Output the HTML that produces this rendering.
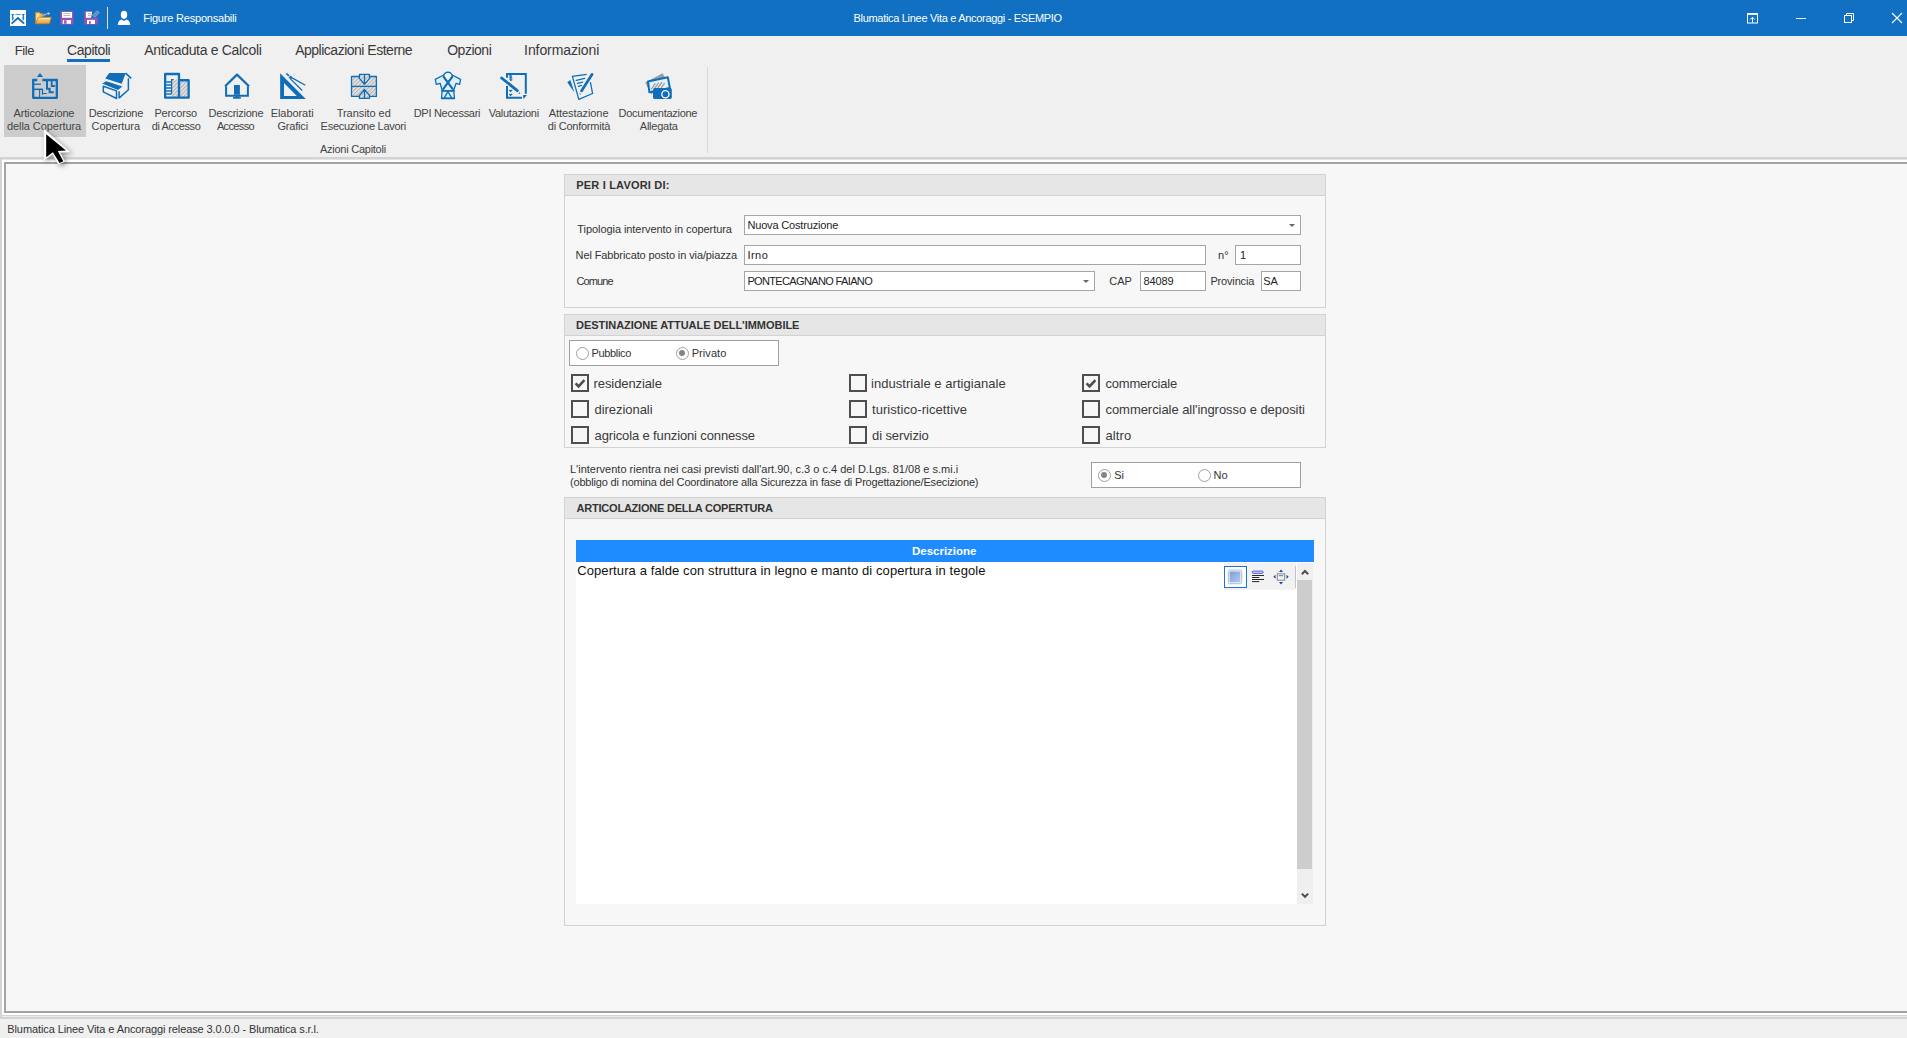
<!DOCTYPE html>
<html><head><meta charset="utf-8">
<style>
*{margin:0;padding:0;box-sizing:border-box}
html,body{width:1907px;height:1038px;overflow:hidden;background:#f0f0f0;font-family:"Liberation Sans",sans-serif}
.t{position:absolute;white-space:pre;line-height:1;transform-origin:0 0}
.r{position:absolute}
.panel{position:absolute;background:#f7f7f7;border:1px solid #d2d2d2}
.ph{position:absolute;left:0;top:0;right:0;height:21px;background:#e6e6e6;border-bottom:1px solid #d2d2d2}
.inp{position:absolute;background:#fff;border:1px solid #a5a5a5}
.cb{position:absolute;width:18px;height:18px;border:2px solid #4f4f4f}
.rad{position:absolute;width:13px;height:13px;border-radius:50%;border:1px solid #a0a0a0;background:#fff}
.dd{position:absolute;width:0;height:0;border-left:3.5px solid transparent;border-right:3.5px solid transparent;border-top:3.5px solid #666}
svg{position:absolute;overflow:visible}
</style></head><body>
<!-- title bar -->
<div class="r" style="left:0;top:0;width:1907px;height:36px;background:#1170c2"></div>
<!-- app icon -->
<svg style="left:10px;top:10px" width="16" height="16" viewBox="0 0 16 16">
<rect x="0" y="0" width="16" height="16" fill="#fff"/>
<path d="M1.6 13.6 L7.9 8 L14.2 13.6" fill="none" stroke="#1a6fb9" stroke-width="1.9"/>
<path d="M2.7 4.3 V10.3 M13.3 4.3 V10.3" stroke="#1a6fb9" stroke-width="1.2"/>
<path d="M1.5 4.5 H3.9 M12.1 4.5 H14.5" stroke="#1a6fb9" stroke-width="1"/>
<path d="M1.1 7.4 H4.3 L2.7 9.6 Z M11.7 7.4 H14.9 L13.3 9.6 Z" fill="#3d86cc"/>
<path d="M5.3 4.5 H10.7" stroke="#5b95d0" stroke-width="1"/>
</svg>
<!-- folder -->
<svg style="left:35px;top:11px" width="17" height="14" viewBox="0 0 17 14">
<defs><linearGradient id="fg" x1="0" y1="0" x2="0" y2="1"><stop offset="0" stop-color="#f8d98a"/><stop offset="1" stop-color="#e8a040"/></linearGradient></defs>
<path d="M0.5 1.3 H4.6 L6 2.8 H8.5 V12.6 H0.5 Z" fill="#f0b84e" stroke="#d07a1c" stroke-width="0.8"/>
<path d="M1.3 2.6 H4.3 V11 H1.3 Z" fill="#fbeaa8"/>
<path d="M3 6.3 H16.2 L14.4 12.7 H0.8 Z" fill="url(#fg)" stroke="#d07a1c" stroke-width="0.8"/>
<path d="M3.6 7 H15 L14.8 7.8 H3.4 Z" fill="#fcefc0"/>
<path d="M7.2 5.6 Q9.2 1.6 12.6 1.9 L12.4 0.2 L15.6 2.5 L12.5 4.7 L12.5 3.4 Q10 3.5 8.8 6 Z" fill="#a6dcf4" stroke="#2f4fa8" stroke-width="0.6" stroke-linejoin="round"/>
</svg>
<!-- save -->
<svg style="left:60px;top:11px" width="14" height="14" viewBox="0 0 14 14">
<rect x="0.4" y="0" width="13" height="13.6" fill="#9b52b3"/>
<rect x="2" y="1" width="10" height="5.8" fill="#fff"/>
<path d="M3.5 2.6 H10.4 M3.5 4.5 H10.4" stroke="#a9a9a9" stroke-width="0.8"/>
<rect x="2.7" y="9" width="8.3" height="3.8" fill="#fff"/>
<rect x="4.1" y="9.2" width="2.4" height="3.6" fill="#9b52b3"/>
</svg>
<svg style="left:84px;top:11px" width="16" height="14" viewBox="0 0 16 14">
<rect x="0.3" y="0.3" width="13.5" height="13.3" fill="#9b52b3"/>
<path d="M8.4 0.2 H14 V5.5 L12.3 7.1 H7 Z" fill="#1170c2"/>
<path d="M1.85 0.85 H8.1 L7.1 6.85 H1.85 Z" fill="#fff"/>
<path d="M4 2.6 H6.9 M4 4.4 H6.9" stroke="#b0a8a0" stroke-width="0.9"/>
<rect x="3" y="8.9" width="7.9" height="4.1" fill="#fff"/>
<rect x="5.1" y="10" width="1.6" height="3" fill="#9b52b3"/>
<path d="M8.6 4.2 L13.2 -0.4 L15.4 1.8 L10.8 6.4 Z" fill="#5d8fc4" stroke="#8fb0d0" stroke-width="0.7"/>
</svg>
<div class="r" style="left:107px;top:7px;width:1px;height:22px;background:#e3ddd6"></div>
<!-- user -->
<svg style="left:117px;top:10px" width="14" height="16" viewBox="0 0 14 16">
<ellipse cx="7" cy="4.8" rx="3.2" ry="4.1" fill="#fff"/>
<path d="M0.8 15 Q0.8 10.8 4.5 9.6 L7 11 L9.5 9.6 Q13.2 10.8 13.2 15 Z" fill="#fff"/>
</svg>
<!-- window controls -->
<svg style="left:1747px;top:13px" width="12" height="11" viewBox="0 0 12 11">
<rect x="0.5" y="0.5" width="10" height="9.5" fill="none" stroke="#fff" stroke-width="1"/>
<path d="M0.5 1.3 H10.5" stroke="#fff" stroke-width="1.2"/>
<path d="M5.5 9.8 V4.3 M3.2 6.6 L5.5 4.2 L7.8 6.6" fill="none" stroke="#fff" stroke-width="1"/>
</svg>
<div class="r" style="left:1796px;top:18px;width:10px;height:1px;background:#fff"></div>
<svg style="left:1844px;top:12px" width="11" height="11" viewBox="0 0 11 11">
<rect x="0.5" y="3.5" width="7" height="7" fill="none" stroke="#fff" stroke-width="1"/>
<path d="M2.5 3.5 V1.5 H9.5 V8.5 H7.5" fill="none" stroke="#fff" stroke-width="1"/>
</svg>
<svg style="left:1892px;top:13px" width="10" height="10" viewBox="0 0 10 10">
<path d="M0 0 L10 10 M10 0 L0 10" stroke="#fff" stroke-width="1.1"/>
</svg>

<!-- menu underline -->
<div class="r" style="left:67px;top:59px;width:43px;height:3px;background:#1170c2"></div>
<!-- hover -->
<div class="r" style="left:4px;top:65px;width:82px;height:72px;background:#cccccc"></div>
<!-- ribbon separator -->
<div class="r" style="left:707px;top:67px;width:1px;height:86px;background:#d9d9d9"></div>

<!-- ribbon icons -->
<!-- articolazione -->
<svg style="left:26px;top:68px" width="40" height="36" viewBox="0 0 40 36">
<g fill="none" stroke="#106db7">
<path d="M11.3 12 H7.2 V29.8 H30.8 V12 H16.3" stroke-width="2.3" stroke-linejoin="round"/>
<path d="M8 16.2 H14.9" stroke-width="1.3"/>
<path d="M8 21.3 H17" stroke-width="1.5"/>
<path d="M13.6 21.3 V29" stroke-width="1.1"/>
<path d="M16.5 21.3 V26.8 M16.3 25.5 H20.8" stroke-width="1.2"/>
<path d="M21 12 V20.8 H23.6 V24.3 H27.7" stroke-width="2"/>
<path d="M25.7 12 V18 H29" stroke-width="1.8"/>
</g>
<path d="M10.9 8.9 H17 L14 5 Z" fill="#106db7"/>
</svg>
<!-- descrizione copertura -->
<svg style="left:96px;top:68px" width="40" height="36" viewBox="0 0 40 36">
<path d="M13.2 5 H29.8 L25.7 15.8 L9.2 10.6 Z" fill="#106db7"/>
<path d="M29.6 5.2 L35.2 10.4" stroke="#106db7" stroke-width="1.6" fill="none"/>
<path d="M6.1 15.6 L10.4 13.2 L26.4 18.4 L21.9 21.9 Z" fill="#106db7"/>
<path d="M7.3 18.2 V23.9 L20.5 30.5 V22.9 Z" fill="none" stroke="#106db7" stroke-width="1.5" stroke-linejoin="round"/>
<path d="M32.4 10.2 V21.7 L23.6 29.6 M23.1 23.2 V30.5" fill="none" stroke="#106db7" stroke-width="1.5"/>
</svg>
<!-- percorso -->
<svg style="left:156px;top:68px" width="40" height="36" viewBox="0 0 40 36">
<defs><pattern id="hatch" width="2.8" height="2.8" patternUnits="userSpaceOnUse" patternTransform="rotate(45)"><rect width="2.8" height="2.8" fill="#e4e4e4"/><rect width="1.1" height="2.8" fill="#b2b2b2"/></pattern></defs>
<rect x="15.6" y="11.5" width="7.3" height="18" fill="url(#hatch)"/>
<rect x="23" y="12.8" width="9.6" height="16.8" fill="url(#hatch)"/>
<g fill="none" stroke="#106db7">
<path d="M23 12.25 V6 H9.15 V29.7 H32.65 V12.25 H23 V29.7" stroke-width="2.3" stroke-linejoin="round"/>
<path d="M10.2 14 H15.6 M10.2 17 H15.6 M10.2 20 H15.6 M10.2 23 H15.6 M10.2 26 H15.6" stroke-width="1.4"/>
<path d="M15.6 26 V11.6 H17.6" stroke-width="1.2"/>
</g>
</svg>
<!-- descrizione accesso -->
<svg style="left:216px;top:68px" width="40" height="36" viewBox="0 0 40 36">
<path d="M9.1 18.3 L21 6.6 L33 18.3" fill="none" stroke="#106db7" stroke-width="2.2" stroke-linejoin="round"/>
<path d="M10.1 18.3 V27.7 H31.9 V18.3" fill="none" stroke="#106db7" stroke-width="2"/>
<rect x="18" y="17" width="5.9" height="9.7" fill="#106db7"/>
<rect x="17" y="29" width="7.8" height="1.7" fill="#106db7"/>
<path d="M18 26.7 Q21 29.5 23.9 26.7" fill="none" stroke="#106db7" stroke-width="1.5"/>
</svg>
<!-- elaborati grafici -->
<svg style="left:272px;top:68px" width="40" height="36" viewBox="0 0 40 36">
<path d="M8.15 5.2 V30.9 H33.8 Z M12 14.9 V27.9 H24.8 Z" fill="#106db7" fill-rule="evenodd"/>
<path d="M14.4 5.6 L17 7.8" stroke="#106db7" stroke-width="1.6"/>
<path d="M16.6 9.4 L18.6 7.6 L20.6 9.6 L18.6 11.4 Z" fill="#106db7"/>
<path d="M18.7 11.1 L30.2 22.5 M20.1 9.9 L33.3 17.3" stroke="#106db7" stroke-width="1.3"/>
</svg>
<!-- transito -->
<svg style="left:344px;top:68px" width="40" height="36" viewBox="0 0 40 36">
<rect x="7.5" y="8.5" width="24.9" height="19.9" fill="url(#hatch)"/>
<g fill="none" stroke="#106db7" stroke-width="1.3" stroke-linejoin="round">
<rect x="7.5" y="8.5" width="24.9" height="19.9"/>
<path d="M7.5 18.4 H32.4"/>
<path d="M15.4 8.5 V6.4 H25.5 V8.5 V10.4 L20.5 16.3 L15.4 10.4 Z M20.5 6.4 V16.3" fill="url(#hatch)"/>
<path d="M15.4 28.4 V30.35 H25.5 V28.4 V27.4 L20.5 21.5 L15.4 27.4 Z M20.5 30.35 V21.5" fill="url(#hatch)"/>
</g>
</svg>
<!-- DPI -->
<svg style="left:428px;top:68px" width="40" height="36" viewBox="0 0 40 36">
<path d="M15.2 7.2 L24.7 7.2 L32.6 11.4 L31.6 16.3 L28.1 15.3 L25.7 22.2 L26.5 30.5 H13.5 L14.2 22.2 L12.1 15.3 L8.3 16.3 L7.3 11.4 Z" fill="#dff0fb" stroke="#106db7" stroke-width="1.3" stroke-linejoin="round"/>
<path d="M15.6 8.6 A4.35 4.35 0 1 1 24.3 8.6 L19.95 14.3 Z" fill="#f4fbff" stroke="#106db7" stroke-width="1.4" stroke-linejoin="round"/>
<path d="M15.3 8.4 L25.1 21.6 M24.6 8.4 L14.8 21.6" stroke="#106db7" stroke-width="2.1"/>
<path d="M13.2 22.9 H26.7" stroke="#106db7" stroke-width="1.8"/>
<path d="M19.9 23.5 L16.3 29.8 M19.9 23.5 L23.6 29.8" stroke="#106db7" stroke-width="1.4"/>
<path d="M13.5 30.2 H26.5" stroke="#106db7" stroke-width="1.4"/>
</svg>
<!-- valutazioni -->
<svg style="left:494px;top:68px" width="40" height="36" viewBox="0 0 40 36">
<path d="M13 9.7 V6 H31.8 V25.8" fill="none" stroke="#106db7" stroke-width="2"/>
<path d="M13 18 V29.7 H27.9" fill="none" stroke="#106db7" stroke-width="2"/>
<path d="M29.1 27.05 H33 L29.3 30.9 Z" fill="#106db7"/>
<path d="M7.6 10 L23.3 22.6" stroke="#106db7" stroke-width="2.8" stroke-linecap="round"/>
<path d="M24.3 25.7 L26 23.9 L26.2 25.8 Z" fill="#106db7"/>
<path d="M15.4 7.4 L17.6 8 L15.6 9.3 L17.8 9.9 L15.8 11.2 L18 11.8 L16.2 12.8" fill="none" stroke="#106db7" stroke-width="1.1" stroke-linejoin="round"/>
<path d="M15.4 22 L16.6 23.4 L18.2 21.8 M15.4 26 L16.6 27.4 L18.2 25.8" fill="none" stroke="#106db7" stroke-width="1.2"/>
</svg>
<!-- attestazione -->
<svg style="left:559px;top:68px" width="40" height="36" viewBox="0 0 40 36">
<path d="M8.3 14.2 L11.4 12.1 L15.4 24.6 Z" fill="#106db7"/>
<path d="M27.7 6.4 L13.4 8.3 L19.8 31.4 L33.6 25.5 L31.4 14.2" fill="none" stroke="#106db7" stroke-width="1.3" stroke-linejoin="round"/>
<path d="M17.3 12.3 L25.7 10.4 M18.4 15.4 L23.6 14.2 M19.4 18.4 L22.5 17.3" stroke="#106db7" stroke-width="1.3" stroke-linecap="round"/>
<path d="M22.5 22.9 L33.1 6.3" stroke="#106db7" stroke-width="2.7" stroke-linecap="round"/>
<path d="M20.5 25.3 L21.7 26.4" stroke="#106db7" stroke-width="1"/>
</svg>
<!-- documentazione -->
<svg style="left:639px;top:68px" width="40" height="36" viewBox="0 0 40 36">
<path d="M6.2 14.6 L23.6 5.2 L25.7 8.7 L12.5 26.7 Z" fill="#9c9c9c"/>
<path d="M9 13.4 L28.8 9.2 L30.9 20.1 L10.4 24.3 Z" fill="#e2f1fb" stroke="#106db7" stroke-width="2" stroke-linejoin="round"/>
<path d="M12 21.5 L16.4 15.3 M15.2 21 L19.8 14.6 M18.6 20.4 L23 14.2 M22.2 19.8 L25.6 15.2" stroke="#999" stroke-width="1.2"/>
<rect x="14" y="20.1" width="18.8" height="10.8" rx="1.6" fill="#106db7"/>
<circle cx="26.4" cy="26.2" r="3.6" fill="none" stroke="#fff" stroke-width="1.3"/>
<circle cx="26.4" cy="26.2" r="2.3" fill="#106db7"/>
</svg>

<!-- frame -->
<div class="r" style="left:0;top:157px;width:1907px;height:862px;background:#d3d3d3"></div>
<div class="r" style="left:2px;top:159px;width:1905px;height:856px;background:#fff"></div>
<div class="r" style="left:2px;top:159px;width:1905px;height:1px;background:#e4e4e4"></div>
<div class="r" style="left:4px;top:162px;width:1903px;height:851px;background:#a3a3a3"></div>
<div class="r" style="left:6px;top:164px;width:1901px;height:847px;background:#f7f7f7"></div>
<div class="r" style="left:2px;top:1016px;width:1905px;height:1px;background:#ececec"></div>

<!-- panel 1 -->
<div class="panel" style="left:564px;top:174px;width:762px;height:134px"><div class="ph"></div></div>
<div class="inp" style="left:744px;top:215px;width:557px;height:20px"></div>
<div class="dd" style="left:1289px;top:224px"></div>
<div class="inp" style="left:744px;top:245px;width:462px;height:20px"></div>
<div class="inp" style="left:1235px;top:245px;width:66px;height:20px"></div>
<div class="inp" style="left:744px;top:271px;width:351px;height:20px"></div>
<div class="dd" style="left:1083px;top:280px"></div>
<div class="inp" style="left:1140px;top:271px;width:66px;height:20px"></div>
<div class="inp" style="left:1261px;top:271px;width:40px;height:20px"></div>

<!-- panel 2 -->
<div class="panel" style="left:564px;top:314px;width:762px;height:134px"><div class="ph"></div></div>
<div class="inp" style="left:569px;top:340px;width:210px;height:26px;border-color:#a0a0a0"></div>
<div class="rad" style="left:575.5px;top:346.5px"></div>
<div class="rad" style="left:675.5px;top:346.5px"></div>
<div class="r" style="left:679px;top:350px;width:6px;height:6px;border-radius:50%;background:#858585"></div>
<div class="cb" style="left:571px;top:374px"></div>
<div class="cb" style="left:571px;top:400px"></div>
<div class="cb" style="left:571px;top:426px"></div>
<div class="cb" style="left:849px;top:374px"></div>
<div class="cb" style="left:849px;top:400px"></div>
<div class="cb" style="left:849px;top:426px"></div>
<div class="cb" style="left:1082px;top:374px"></div>
<div class="cb" style="left:1082px;top:400px"></div>
<div class="cb" style="left:1082px;top:426px"></div>
<svg style="left:571px;top:374px" width="18" height="18" viewBox="0 0 18 18"><path d="M4.6 9.3 L7.6 12.3 L13.4 6.2" fill="none" stroke="#4d4d4d" stroke-width="2.6"/></svg>
<svg style="left:1082px;top:374px" width="18" height="18" viewBox="0 0 18 18"><path d="M4.6 9.3 L7.6 12.3 L13.4 6.2" fill="none" stroke="#4d4d4d" stroke-width="2.6"/></svg>

<!-- si/no -->
<div class="inp" style="left:1091px;top:462px;width:210px;height:26px;border-color:#a0a0a0"></div>
<div class="rad" style="left:1097.5px;top:468.5px"></div>
<div class="r" style="left:1101px;top:472px;width:6px;height:6px;border-radius:50%;background:#858585"></div>
<div class="rad" style="left:1197.5px;top:468.5px"></div>

<!-- panel 3 -->
<div class="panel" style="left:564px;top:497px;width:762px;height:429px"><div class="ph"></div></div>
<div class="r" style="left:576px;top:540px;width:738px;height:22px;background:#1e8cff"></div>
<div class="r" style="left:576px;top:562px;width:737px;height:342px;background:#fff"></div>
<!-- toolbar -->
<div class="r" style="left:1224px;top:563px;width:72px;height:27px;background:#f2f2f2"></div>
<div class="r" style="left:1295px;top:566px;width:1px;height:22px;background:#c4c4c4"></div>
<div class="r" style="left:1224px;top:566px;width:23px;height:22px;border:1.6px solid #1a74da;background:#fff"></div>
<svg style="left:1227px;top:569px" width="16" height="16" viewBox="0 0 16 16">
<defs><linearGradient id="bg1" x1="0" y1="0" x2="1" y2="1"><stop offset="0" stop-color="#7b9fd9"/><stop offset="1" stop-color="#b3c9ec"/></linearGradient></defs>
<rect x="1.3" y="1.1" width="13.4" height="13.6" rx="1.4" fill="#fff" stroke="#a9bcd8" stroke-width="1"/>
<rect x="2.6" y="2.4" width="10.8" height="11" fill="url(#bg1)"/>
</svg>
<svg style="left:1251px;top:570px" width="14" height="14" viewBox="0 0 14 14">
<rect x="1.2" y="1.1" width="11" height="2.3" rx="1.1" fill="#c9d0ff" stroke="#4650e0" stroke-width="0.9"/>
<path d="M1 5.5 H13 M1 7.5 H8.3 M1 9.5 H13 M1 11.6 H8.3" stroke="#1e1e1e" stroke-width="0.95"/>
</svg>
<svg style="left:1273px;top:569px" width="16" height="16" viewBox="0 0 16 16">
<path d="M8 0.6 L10 3 H6 Z M8 15.4 L10 13 H6 Z M0.3 7.8 L2.5 5.8 V9.8 Z M15.7 7.8 L13.5 5.8 V9.8 Z" fill="#21489c"/>
<rect x="4.3" y="4.8" width="7.4" height="6.4" fill="#f4f4f4" stroke="#8a8a8a" stroke-width="1"/>
<path d="M5.8 6.7 H10.2" stroke="#3d6cc8" stroke-width="0.9"/>
</svg>
<!-- scrollbar -->
<div class="r" style="left:1297px;top:563px;width:16px;height:341px;background:#efefef"></div>
<div class="r" style="left:1297px;top:580px;width:15px;height:289px;background:#cdcdcd"></div>
<svg style="left:1297px;top:566px" width="16" height="12" viewBox="0 0 16 12"><path d="M4.8 8.2 L8 5 L11.2 8.2" fill="none" stroke="#4d4d4d" stroke-width="2"/></svg>
<svg style="left:1297px;top:890px" width="16" height="12" viewBox="0 0 16 12"><path d="M4.8 3.6 L8 6.8 L11.2 3.6" fill="none" stroke="#4d4d4d" stroke-width="2"/></svg>

<div class="t" style="left:853.50px;top:13.39px;font-size:11px;color:#fff;letter-spacing:-0.305px">Blumatica Linee Vita e Ancoraggi - ESEMPIO</div>
<div class="t" style="left:143.20px;top:13.39px;font-size:11px;color:#fff;letter-spacing:-0.2px">Figure Responsabili</div>
<div class="t" style="left:14.70px;top:43.80px;font-size:13px;color:#3a3a3a;letter-spacing:-0.35px">File</div>
<div class="t" style="left:67.10px;top:42.95px;font-size:14px;color:#3a3a3a;letter-spacing:-0.443px">Capitoli</div>
<div class="t" style="left:144.20px;top:42.95px;font-size:14px;color:#3a3a3a;letter-spacing:-0.321px">Anticaduta e Calcoli</div>
<div class="t" style="left:295.20px;top:42.95px;font-size:14px;color:#3a3a3a;letter-spacing:-0.495px">Applicazioni Esterne</div>
<div class="t" style="left:447.20px;top:42.95px;font-size:14px;color:#3a3a3a;letter-spacing:-0.483px">Opzioni</div>
<div class="t" style="left:524.10px;top:42.95px;font-size:14px;color:#3a3a3a;letter-spacing:-0.091px">Informazioni</div>
<div class="t" style="left:13.60px;top:108.09px;font-size:11px;color:#444;letter-spacing:-0.175px">Articolazione</div>
<div class="t" style="left:7.00px;top:121.09px;font-size:11px;color:#444;letter-spacing:-0.071px">della Copertura</div>
<div class="t" style="left:88.80px;top:108.09px;font-size:11px;color:#444;letter-spacing:-0.3px">Descrizione</div>
<div class="t" style="left:91.60px;top:121.09px;font-size:11px;color:#444;letter-spacing:-0.062px">Copertura</div>
<div class="t" style="left:154.40px;top:108.09px;font-size:11px;color:#444;letter-spacing:-0.186px">Percorso</div>
<div class="t" style="left:151.80px;top:121.09px;font-size:11px;color:#444;letter-spacing:-0.4px">di Accesso</div>
<div class="t" style="left:208.60px;top:108.09px;font-size:11px;color:#444;letter-spacing:-0.25px">Descrizione</div>
<div class="t" style="left:216.90px;top:121.09px;font-size:11px;color:#444;letter-spacing:-0.633px">Accesso</div>
<div class="t" style="left:270.70px;top:108.09px;font-size:11px;color:#444;letter-spacing:-0.062px">Elaborati</div>
<div class="t" style="left:277.50px;top:121.09px;font-size:11px;color:#444;letter-spacing:-0.2px">Grafici</div>
<div class="t" style="left:336.70px;top:108.09px;font-size:11px;color:#444;letter-spacing:-0.05px">Transito ed</div>
<div class="t" style="left:320.60px;top:121.09px;font-size:11px;color:#444;letter-spacing:-0.269px">Esecuzione Lavori</div>
<div class="t" style="left:413.70px;top:108.09px;font-size:11px;color:#444;letter-spacing:-0.292px">DPI Necessari</div>
<div class="t" style="left:488.70px;top:108.09px;font-size:11px;color:#444;letter-spacing:-0.26px">Valutazioni</div>
<div class="t" style="left:548.80px;top:108.09px;font-size:11px;color:#444;letter-spacing:-0.073px">Attestazione</div>
<div class="t" style="left:547.80px;top:121.09px;font-size:11px;color:#444;letter-spacing:-0.242px">di Conformità</div>
<div class="t" style="left:618.60px;top:108.09px;font-size:11px;color:#444;letter-spacing:-0.285px">Documentazione</div>
<div class="t" style="left:639.80px;top:121.09px;font-size:11px;color:#444;letter-spacing:-0.243px">Allegata</div>
<div class="t" style="left:320.00px;top:144.29px;font-size:11px;color:#444;letter-spacing:-0.257px">Azioni Capitoli</div>
<div class="t" style="left:576.20px;top:180.19px;font-size:11px;color:#333;letter-spacing:0.2px;font-weight:bold">PER I LAVORI DI:</div>
<div class="t" style="left:577.30px;top:223.69px;font-size:11px;color:#333;letter-spacing:-0.066px">Tipologia intervento in copertura</div>
<div class="t" style="left:575.60px;top:250.09px;font-size:11px;color:#333;letter-spacing:-0.109px">Nel Fabbricato posto in via/piazza</div>
<div class="t" style="left:576.60px;top:275.69px;font-size:11px;color:#333;letter-spacing:-0.92px">Comune</div>
<div class="t" style="left:747.40px;top:219.69px;font-size:11px;color:#222;letter-spacing:-0.163px">Nuova Costruzione</div>
<div class="t" style="left:747.40px;top:249.69px;font-size:11px;color:#222;letter-spacing:0.467px">Irno</div>
<div class="t" style="left:747.40px;top:275.69px;font-size:11px;color:#222;letter-spacing:-0.644px">PONTECAGNANO FAIANO</div>
<div class="t" style="left:1218.05px;top:250.09px;font-size:11px;color:#333">n°</div>
<div class="t" style="left:1240.00px;top:249.69px;font-size:11px;color:#222">1</div>
<div class="t" style="left:1109.25px;top:275.69px;font-size:11px;color:#333">CAP</div>
<div class="t" style="left:1143.50px;top:275.69px;font-size:11px;color:#222;letter-spacing:-0.125px">84089</div>
<div class="t" style="left:1210.40px;top:275.69px;font-size:11px;color:#333;letter-spacing:-0.163px">Provincia</div>
<div class="t" style="left:1263.25px;top:275.69px;font-size:11px;color:#222">SA</div>
<div class="t" style="left:576.00px;top:320.29px;font-size:11px;color:#333;letter-spacing:-0.03px;font-weight:bold">DESTINAZIONE ATTUALE DELL'IMMOBILE</div>
<div class="t" style="left:591.50px;top:348.19px;font-size:11px;color:#333;letter-spacing:-0.329px">Pubblico</div>
<div class="t" style="left:691.70px;top:348.19px;font-size:11px;color:#333;letter-spacing:0.067px">Privato</div>
<div class="t" style="left:593.60px;top:376.60px;font-size:13px;color:#3a3a3a;letter-spacing:-0.1px">residenziale</div>
<div class="t" style="left:594.60px;top:402.80px;font-size:13px;color:#3a3a3a;letter-spacing:-0.06px">direzionali</div>
<div class="t" style="left:594.60px;top:428.60px;font-size:13px;color:#3a3a3a;letter-spacing:-0.133px">agricola e funzioni connesse</div>
<div class="t" style="left:871.00px;top:376.60px;font-size:13px;color:#3a3a3a;letter-spacing:0.042px">industriale e artigianale</div>
<div class="t" style="left:872.00px;top:402.80px;font-size:13px;color:#3a3a3a;letter-spacing:0.056px">turistico-ricettive</div>
<div class="t" style="left:872.00px;top:428.60px;font-size:13px;color:#3a3a3a;letter-spacing:-0.1px">di servizio</div>
<div class="t" style="left:1105.50px;top:376.60px;font-size:13px;color:#3a3a3a;letter-spacing:-0.2px">commerciale</div>
<div class="t" style="left:1105.50px;top:402.80px;font-size:13px;color:#3a3a3a;letter-spacing:-0.053px">commerciale all'ingrosso e depositi</div>
<div class="t" style="left:1105.50px;top:428.60px;font-size:13px;color:#3a3a3a;letter-spacing:0.125px">altro</div>
<div class="t" style="left:570.00px;top:464.09px;font-size:11px;color:#333">L'intervento rientra nei casi previsti dall'art.90, c.3 o c.4 del D.Lgs. 81/08 e s.mi.i</div>
<div class="t" style="left:570.00px;top:476.99px;font-size:11px;color:#333;letter-spacing:-0.177px">(obbligo di nomina del Coordinatore alla Sicurezza in fase di Progettazione/Esecizione)</div>
<div class="t" style="left:1114.15px;top:469.69px;font-size:11px;color:#333">Si</div>
<div class="t" style="left:1213.45px;top:469.69px;font-size:11px;color:#333">No</div>
<div class="t" style="left:576.50px;top:503.09px;font-size:11px;color:#333;letter-spacing:-0.214px;font-weight:bold">ARTICOLAZIONE DELLA COPERTURA</div>
<div class="t" style="left:912.00px;top:546.27px;font-size:11.5px;color:#fff;letter-spacing:-0.01px;font-weight:bold">Descrizione</div>
<div class="t" style="left:577.20px;top:563.80px;font-size:13px;color:#111;letter-spacing:0.104px">Copertura a falde con struttura in legno e manto di copertura in tegole</div>
<div class="t" style="left:7.30px;top:1024.29px;font-size:11px;color:#333;letter-spacing:-0.102px">Blumatica Linee Vita e Ancoraggi release 3.0.0.0 - Blumatica s.r.l.</div>

<!-- cursor -->
<svg style="left:36px;top:122px;filter:drop-shadow(2px 2px 2.5px rgba(0,0,0,0.4))" width="40" height="44" viewBox="0 0 40 44">
<path d="M8.2 7.4 V37.8 L16.8 32 L22.3 42.2 L28.6 39.6 L23.6 30.2 L33.8 30 Z" fill="#fff" stroke="#fff" stroke-width="0.6" stroke-linejoin="round"/>
<path d="M10.2 12.2 V35.3 L16.9 30.3 L23.6 41 L27.3 39.2 L21.8 29 L30 28.6 Z" fill="#000"/>
</svg>
</body></html>
